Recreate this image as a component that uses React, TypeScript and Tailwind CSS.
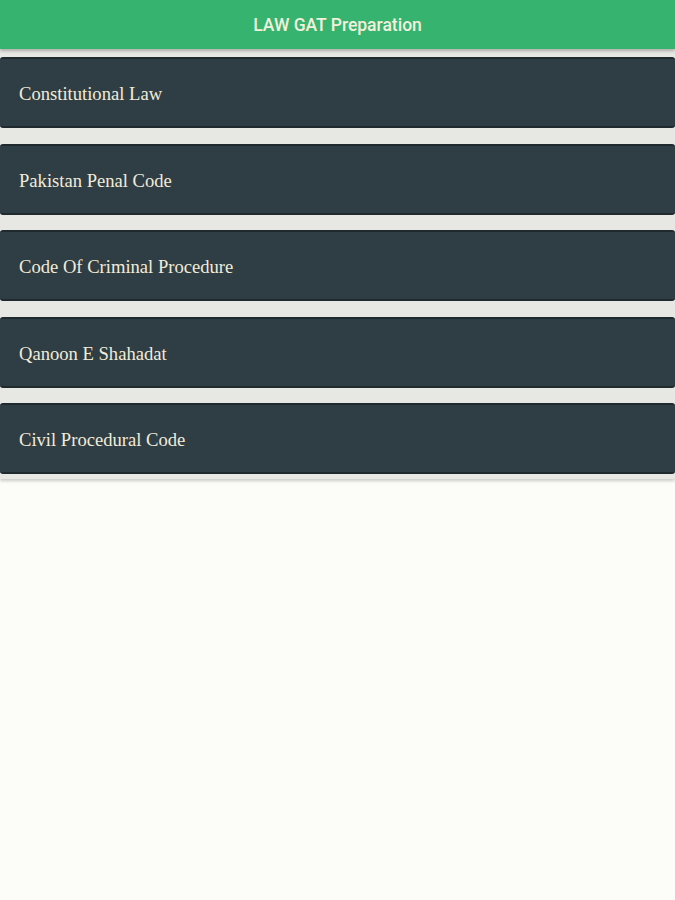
import React from "react";

const items = [
  "Constitutional Law",
  "Pakistan Penal Code",
  "Code Of Criminal Procedure",
  "Qanoon E Shahadat",
  "Civil Procedural Code",
];

export default function App() {
  return (
    <div className="min-h-[900px] w-[675px] bg-[#fcfdf9]">
      <div
        className="relative z-10 flex h-[49px] items-center justify-center bg-[#36b46f] pt-[2px] text-[17.5px] font-medium text-[#f3f0dc] shadow-[0_2px_3px_rgba(0,0,0,0.25)]"
        style={{ fontFamily: "Roboto, 'Liberation Sans', sans-serif" }}
      >
        LAW GAT Preparation
      </div>
      <div className="flex flex-col gap-[15.5px] bg-[#e7e7e3] pt-[8px] pb-[5px] shadow-[0_2px_3px_rgba(0,0,0,0.2)]">
        {items.map((t) => (
          <div
            key={t}
            className="flex h-[71px] items-center rounded-[3px] border-t-2 border-b-2 border-[#1f2a2f] bg-[#2f3d44] pl-[19px] pt-[3px] text-[18.6px] text-[#f1ebd9]"
            style={{ fontFamily: "'Liberation Serif', 'DejaVu Serif', serif" }}
          >
            {t}
          </div>
        ))}
      </div>
    </div>
  );
}
